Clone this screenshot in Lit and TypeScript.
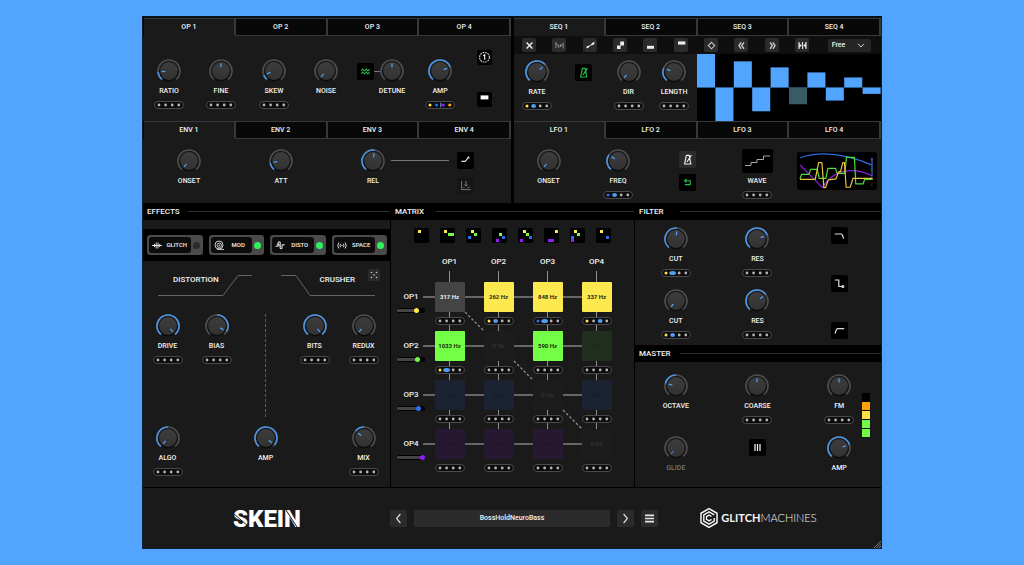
import { LitElement, html, svg, css, nothing } from "lit";
import { customElement, property } from "lit/decorators.js";
import { classMap } from "lit/directives/class-map.js";
import { styleMap } from "lit/directives/style-map.js";

const YELLOW = "#ffe94a";
const GREEN = "#72fa46";
const BLUE = "#2f6ff0";
const PURPLE = "#8f1ff5";
const ORANGE = "#ffa412";
const SKY = "#4f9ff5";

/* ---------- modulation slots: four small dots in a pill ---------- */

const DOTS: Record<string, { fill: string; rx: number; ry: number }> = {
  ".": { fill: "#b4b4b4", rx: 1.4, ry: 1.4 },
  y: { fill: YELLOW, rx: 1.5, ry: 1.5 },
  b: { fill: BLUE, rx: 1.5, ry: 1.5 },
  p: { fill: PURPLE, rx: 1.6, ry: 1.6 },
  o: { fill: ORANGE, rx: 1.6, ry: 1.6 },
  B: { fill: SKY, rx: 2.4, ry: 2.1 },
  W: { fill: SKY, rx: 3.4, ry: 2.1 },
};

@customElement("mod-slots")
export class ModSlots extends LitElement {
  @property() slots = "....";
  @property() for = "";

  static styles = css`
    :host { display: block; width: 30px; height: 8px; }
    .pill { display: block; width: 30px; height: 8px; padding: 0; border: 1px solid #4a4a4a; border-radius: 4px; background: #0c0c0c; box-sizing: border-box; cursor: pointer; }
    .dots { display: block; width: 28px; height: 6px; }
  `;

  render() {
    return html`<button class="pill" aria-label="${this.for} modulation">
      <svg class="dots" viewBox="0 0 28 6">
        ${[...this.slots].map((code, i) => {
          const dot = DOTS[code];
          return svg`<ellipse cx=${4 + i * 6.6} cy="3" rx=${dot.rx} ry=${dot.ry} fill=${dot.fill}></ellipse>`;
        })}
        ${this.slots === "ybpo" ? svg`<path d="M14.8 0.8v4.4" stroke="#5ab4ff" stroke-width="1"></path>` : nothing}
      </svg>
    </button>`;
  }
}

/* ---------- rotary knob ---------- */

const SWEEP = 140;

function polar(deg: number, r: number) {
  const a = ((deg - 90) * Math.PI) / 180;
  return { x: 12 + r * Math.cos(a), y: 12 + r * Math.sin(a) };
}

function arc(from: number, to: number) {
  const [a, b] = from < to ? [from, to] : [to, from];
  const p = polar(a, 11);
  const q = polar(b, 11);
  return `M${p.x} ${p.y}A11 11 0 ${b - a > 180 ? 1 : 0} 1 ${q.x} ${q.y}`;
}

@customElement("skein-knob")
export class SkeinKnob extends LitElement {
  @property() label = "";
  @property({ type: Number }) value = 0;
  @property({ type: Boolean }) bipolar = false;
  @property({ type: Boolean }) dim = false;
  @property() slots = "";

  static styles = css`
    :host { display: flex; flex-direction: column; align-items: center; min-width: 0; }
    .knob { display: flex; flex-direction: column; align-items: center; }
    .dial { position: relative; display: block; width: 24px; height: 24px; }
    .art { display: block; width: 24px; height: 24px; }
    .range { position: absolute; inset: 0; width: 100%; height: 100%; margin: 0; opacity: 0; cursor: pointer; }
    .text { margin-top: 3px; font: 500 7px/10px Roboto, sans-serif; color: #f2f2f2; white-space: nowrap; }
    .off { color: #777; }
    .mods { margin-top: 5px; }
  `;

  render() {
    const angle = -SWEEP + this.value * SWEEP * 2;
    const start = this.bipolar ? 0 : -SWEEP;
    const inner = polar(angle, 3.8);
    const outer = polar(angle, 7.6);
    return html`
      <label class="knob">
        <span class="dial">
          <svg class="art" viewBox="0 0 24 24" fill="none">
            <defs>
              <linearGradient id="face" x1="0" y1="0" x2="0" y2="1">
                <stop offset="0" stop-color="#3d3d3d"></stop>
                <stop offset="1" stop-color="#323232"></stop>
              </linearGradient>
            </defs>
            <circle cx="12" cy="12.8" r="9.4" fill="#0b0b0b"></circle>
            <circle cx="12" cy="12" r="8.9" fill="url(#face)"></circle>
            <path d=${arc(-SWEEP, SWEEP)} stroke="#4f4f4f" stroke-width="1.6"></path>
            ${angle !== start ? svg`<path d=${arc(start, angle)} stroke="#4b94e6" stroke-width="1.6"></path>` : nothing}
            <path d="M${inner.x} ${inner.y}L${outer.x} ${outer.y}" stroke="#4f9ff5" stroke-width="1.3" opacity=${this.dim ? 0.6 : 1}></path>
          </svg>
          <input class="range" type="range" min="0" max="1" step="0.01" .value=${String(this.value)} />
        </span>
        <span class="text ${this.dim ? "off" : ""}">${this.label}</span>
      </label>
      ${this.slots ? html`<mod-slots class="mods" .slots=${this.slots} .for=${this.label}></mod-slots>` : nothing}
    `;
  }
}

/* ---------- icons ---------- */

const metronome = svg`<path d="M4.6 12 6.4 3.4h2.8l1.6 8.6zM7 10 11.4 3.2" fill="none" stroke="currentColor" stroke-width="1.2" stroke-linejoin="round"></path>`;

const SEQ_TOOLS = [
  { name: "Clear", art: svg`<path d="M4.6 4.6l5.8 6M10.4 4.6l-5.8 6" stroke="#eee" stroke-width="1.4"></path>` },
  { name: "Random", art: svg`<path d="M4 4v6M4 5.2l2.6 3M6.8 7v3M8.4 6v3l2.6-3.4M11.2 4.5v6" stroke="#8c8c8c" stroke-width="1" fill="none"></path>` },
  { name: "Ramp", art: svg`<path d="M3.5 10.6V8.6l2.6-1v1.6zM8.4 7.4V5.8l3-2.4v2.8z" fill="#eee"></path><path d="M4 9.6l7-4.6" stroke="#eee" stroke-width=".9"></path>` },
  { name: "Steps", art: svg`<path d="M7.2 3.6H11v3.8H7.2zM4 7.4h3.6V11H4z" fill="#eee"></path>` },
  { name: "Minimum", art: svg`<path d="M4 7.8h7v3H4z" fill="#eee"></path>` },
  { name: "Maximum", art: svg`<path d="M4 3.4h7.4v3.2H4z" fill="#eee"></path>` },
  { name: "Invert", art: svg`<path d="M7.5 4.4l3.2 3.2-3.2 3.2-3.2-3.2z" fill="none" stroke="#c4c4c4" stroke-width="1.1"></path>` },
  { name: "Shift left", art: svg`<path d="M7.2 4.4 5 7.6l2.2 3.2M10 4.4 7.8 7.6l2.2 3.2" fill="none" stroke="#ccc" stroke-width="1.4"></path>` },
  { name: "Shift right", art: svg`<path d="M5 4.4l2.2 3.2L5 10.8M7.8 4.4l2.2 3.2-2.2 3.2" fill="none" stroke="#ccc" stroke-width="1.4"></path>` },
  { name: "Fold", art: svg`<path d="M4 4v7M7.5 4v7M11 4v7" fill="none" stroke="#ddd" stroke-width="1.2"></path><path d="M4 5l2.8 2.5L4 10zM11 5 8.2 7.5 11 10z" fill="#ddd"></path>` },
];

/* Sequencer step levels, -1..1 */
const STEPS = [1, -1, 0.78, -0.71, 0.6, -0.5, 0.45, -0.39, 0.3, -0.19];
const CURRENT_STEP = 5;

const EFFECTS = [
  { name: "GLITCH", on: false, art: svg`<path d="M0 5.5h10M2.5 4v3M4.2 2.5v6M6 2.5v6M7.7 4v3" stroke="#eee" stroke-width=".9"></path>` },
  { name: "MOD", on: true, art: svg`<g fill="none" stroke="#ddd" stroke-width=".9"><circle cx="5" cy="5" r="4"></circle><circle cx="5.3" cy="5.3" r="2.2"></circle><circle cx="5.4" cy="5.4" r=".5"></circle><path d="M3 9.4h7"></path></g>` },
  { name: "DISTO", on: true, art: svg`<path d="M.5 6.2h2.7V2h2v6.6h1.8V4.8h2.7M1.8 4.3h1.4M4.2 4.4v2" fill="none" stroke="#eee" stroke-width="1"></path>` },
  { name: "SPACE", on: true, art: svg`<g fill="none" stroke="#eee" stroke-width=".9"><path d="M1.8 2.5q-2 3 0 6M3.6 3.8q-1.2 1.7 0 3.4M8.2 2.5q2 3 0 6M6.4 3.8q1.2 1.7 0 3.4"></path><circle cx="5" cy="5.5" r=".3"></circle></g>` },
];

/* Routing presets: x, y, width, colour of each lit block */
type Block = [number, number, number, string];
const ROUTINGS: Block[][] = [
  [[4, 2, 3, YELLOW]],
  [[4, 2, 3, YELLOW], [8, 5, 6, GREEN]],
  [[5, 2, 3, YELLOW], [8, 5, 3, GREEN], [2, 8, 3, BLUE]],
  [[7, 5, 3, GREEN], [10, 8, 3, BLUE], [4, 11, 3, PURPLE]],
  [[5, 2, 3, YELLOW], [8, 5, 3, GREEN], [11, 8, 3, BLUE], [2, 11, 3, PURPLE]],
  [[11, 2, 3, YELLOW], [4, 11, 6, PURPLE]],
  [[4, 2, 3, YELLOW], [7, 5, 3, GREEN], [1, 8, 3, BLUE], [1, 11, 3, PURPLE]],
  [[4, 2, 3, YELLOW], [10, 8, 3, BLUE]],
];

interface Cell { text: string; tone: string; slots: string; }
const cell = (text: string, tone: string, slots = "...."): Cell => ({ text, tone, slots });

const MATRIX = [
  { name: "OP1", color: YELLOW, level: 73, cells: [cell("317 Hz", "self"), cell("262 Hz", "yellow", "yB.."), cell("848 Hz", "yellow", "bW.."), cell("337 Hz", "yellow", "y.B.")] },
  { name: "OP2", color: GREEN, level: 78, cells: [cell("1033 Hz", "green", "yW.."), cell("0 Hz", "none"), cell("590 Hz", "green"), cell("0 Hz", "green-off")] },
  { name: "OP3", color: BLUE, level: 84, cells: [cell("0 Hz", "blue-off"), cell("0 Hz", "blue-off"), cell("0 Hz", "none"), cell("0 Hz", "blue-off")] },
  { name: "OP4", color: PURPLE, level: 100, cells: [cell("0 Hz", "purple-off"), cell("0 Hz", "purple-off"), cell("0 Hz", "purple-off"), cell("0 Hz", "none")] },
];

const METER = ["#000", "#ff9f0a", "#fbe04a", "#72fa46", "#72fa46"];

@customElement("app-root")
export class AppRoot extends LitElement {
  static styles = css`
    :host { display: block; min-height: 100vh; box-sizing: border-box; padding: 16px 142px; background: #52a5ff; font: 500 7px/10px Roboto, sans-serif; color: #f2f2f2; }
    .synth { position: relative; background: #000; border: 1px solid #0d1c30; border-top: 2px solid #0b1119; }
    .panel { background: #1a1a1a; min-width: 0; }

    .tabs { display: grid; grid-template-columns: repeat(4, 1fr); height: 18px; }
    .inset { padding-left: 1px; }
    .tab { appearance: none; margin: 0; padding: 0 0 1px; border: 0 solid #37383b; border-width: 1px 2px 1px 0; background: #080808; color: #f2f2f2; font: 500 7px/10px Roboto, sans-serif; cursor: pointer; }
    .active { background: #1a1a1a; border-bottom-color: #1a1a1a; }

    .btn { display: grid; place-items: center; flex: none; box-sizing: border-box; width: 15px; height: 15px; margin: 0; padding: 0; border: 0; border-radius: 2px; background: #000; color: #ededed; cursor: pointer; }
    .mid { width: 17px; height: 17px; }
    .raised { background: #2b2b2b; }
    .faint { background: #161616; }
    .lit { color: #25c04a; }
    .ico { display: block; width: 15px; height: 15px; }

    .voices { display: grid; grid-template-columns: 368fr 367fr; column-gap: 3px; }
    .ops { display: grid; grid-template-columns: 52fr 52fr 54fr 50fr 29fr 24fr 72fr 16fr 19fr; min-height: 85px; }
    .drop { padding-top: 23px; }
    .linked { display: flex; align-items: center; justify-content: flex-end; height: 24px; margin-top: 23px; }
    .wire { width: 6px; height: 1px; background: #777; }
    .stack { display: flex; flex-direction: column; align-items: center; justify-content: space-between; }
    .op-side { margin: 14px 0; }

    .seq-tools { display: grid; grid-template-columns: repeat(10, 10fr) 21fr; place-items: center; height: 18px; background: #0f0f0f; }
    .tool { width: 14px; height: 14px; }
    .pick { display: grid; align-items: center; }
    .mode { grid-area: 1 / 1; appearance: none; width: 43px; height: 13px; margin: 0; padding: 0 0 0 4px; border: 0; border-radius: 2px; background: #262626; color: #f2f2f2; font: 500 7px/13px Roboto, sans-serif; }
    .arrow { grid-area: 1 / 1; justify-self: end; width: 8px; height: 5px; margin-right: 6px; pointer-events: none; }
    .seq { display: grid; grid-template-columns: 46fr 46fr 45fr 46fr 184fr; min-height: 67px; }
    .seq-drop { padding-top: 6px; }
    .seq-sync { display: grid; place-items: center; height: 24px; margin-top: 6px; }
    .steps { display: block; width: 100%; height: 67px; background: #000; }

    .env { display: grid; grid-template-columns: 92fr 92fr 28fr 36fr 58fr 32fr 30fr; align-items: start; min-height: 64px; box-sizing: border-box; padding-top: 10px; }
    .curve { height: 1px; margin-top: 11px; background: #777; }
    .env-side { gap: 8px; padding-top: 3px; }
    .lfo { display: grid; grid-template-columns: 69fr 70fr 69fr 70fr 89fr; align-items: start; min-height: 64px; box-sizing: border-box; padding-top: 10px; }
    .lfo-side { gap: 6px; padding-top: 2px; }
    .wave-cell { display: flex; flex-direction: column; align-items: center; }
    .wave { display: block; width: 31px; height: 24px; padding: 0; border: 0; border-radius: 2px; background: #000; }
    .wave-art { display: block; width: 31px; height: 24px; }
    .caption { margin-top: 3px; }
    .slots { margin-top: 5px; }
    .scope { justify-self: center; display: block; width: 80px; height: 38px; margin-top: 3px; border-radius: 3px; background: #000; }

    .lower { display: grid; grid-template-columns: 247fr 243fr 246fr; column-gap: 1px; }
    .head { display: flex; align-items: center; gap: 8px; height: 17px; padding-left: 4px; background: #000; }
    .title { margin: 0; min-width: 33px; font: 500 8px/10px Roboto, sans-serif; }
    .rule { flex: 1; height: 1px; background: #303033; }
    .column { display: flex; flex-direction: column; min-width: 0; }

    .band { height: 9px; background: #1a1a1a; }
    .toggles { display: grid; grid-template-columns: repeat(4, 1fr); column-gap: 6px; padding: 6px 3px 6px 4px; }
    .toggle { display: flex; align-items: center; box-sizing: border-box; height: 20px; padding: 2px; border-radius: 3px; background: #4a4a4a; cursor: pointer; }
    .plate { flex: 1; display: flex; align-items: center; box-sizing: border-box; height: 16px; padding-left: 3px; border-radius: 3px; background: #0c0c0c; }
    .fx-ico { flex: none; width: 11px; height: 11px; }
    .fx-name { flex: 1; text-align: center; font: 500 6px/10px Roboto, sans-serif; }
    .led { appearance: none; flex: none; width: 7px; height: 7px; margin: 0 1px 0 2px; border-radius: 50%; background: #2b2b2b; }
    .led:checked { background: #2df25e; }
    .fx-body { flex: 1; padding: 14px 2px 10px 0; }
    .fx-heads { position: relative; display: flex; justify-content: space-between; padding: 0 13px 0 15px; }
    .fx-head { display: grid; width: 94px; height: 21px; }
    .outline { grid-area: 1 / 1; width: 94px; height: 21px; }
    .fx-title { grid-area: 1 / 1; margin: 0; font: 500 8px/10px Roboto, sans-serif; }
    .to-left { padding-left: 15px; }
    .to-right { padding-right: 20px; text-align: right; }
    .die { position: absolute; right: 8px; top: -6px; width: 12px; height: 12px; }
    .die-art { width: 12px; height: 12px; }
    .fx-knobs { display: grid; grid-template-columns: repeat(5, 1fr); grid-template-rows: 103px auto; row-gap: 9px; align-items: start; margin-top: 18px; }
    .divider { justify-self: center; height: 103px; border-left: 1px dashed #5c5c5c; }
    .skip { grid-column: 3; }
    .last { grid-column: 5; }

    .matrix { flex: 1; padding: 8px 0 9px; }
    .routes { display: flex; justify-content: center; gap: 11px; }
    .grid { display: grid; grid-template-columns: 28px repeat(4, 49px); grid-template-rows: 25px repeat(4, 49px); justify-content: center; margin-top: 14px; padding-right: 7px; }
    .lines { grid-area: 1 / 1 / -1 / -1; width: 224px; height: 221px; }
    .col-name { grid-row: 1; text-align: center; font: 500 8px/10px Roboto, sans-serif; }
    .c0 { grid-column: 2; }
    .c1 { grid-column: 3; }
    .c2 { grid-column: 4; }
    .c3 { grid-column: 5; }
    .r0 { grid-row: 2; }
    .r1 { grid-row: 3; }
    .r2 { grid-row: 4; }
    .r3 { grid-row: 5; }
    .row-name { grid-column: 1; display: flex; flex-direction: column; align-items: center; gap: 6px; padding-top: 10px; font: 500 8px/10px Roboto, sans-serif; }
    .level { appearance: none; width: 28px; height: 5px; margin: 0; border-radius: 3px; background: linear-gradient(90deg, #454545 var(--level), #000 var(--level)) center / 100% 3px no-repeat #000; }
    .level::-webkit-slider-thumb { appearance: none; width: 5px; height: 5px; border-radius: 50%; background: var(--tone); }
    .node { display: flex; flex-direction: column; align-items: center; gap: 5px; }
    .amount { width: 30px; height: 30px; margin: 0; padding: 0; border: 0; border-radius: 1px; font: 700 6px/10px Roboto, sans-serif; white-space: nowrap; cursor: pointer; }
    .self { background: #444; color: #f2f2f2; }
    .yellow { background: #fce94f; color: #2a2712; }
    .green { background: #72ff46; color: #16300e; }
    .none { background: #1c1c1c; color: #363636; font-weight: 500; }
    .green-off { background: #212f1e; color: #1b271a; font-weight: 500; }
    .blue-off { background: #1b2231; color: #181c28; font-weight: 500; }
    .purple-off { background: #261830; color: #1f1528; font-weight: 500; }

    .filter { display: grid; grid-template-columns: repeat(3, 1fr); min-height: 125px; box-sizing: border-box; padding: 7px 1px 0 0; }
    .pair { display: grid; grid-template-rows: 62px auto; align-items: start; }
    .shapes { padding-bottom: 6px; }
    .master { display: grid; grid-template-columns: 82fr 82fr 18fr 46fr 18fr; grid-template-rows: 62px auto; align-items: start; min-height: 125px; box-sizing: border-box; padding: 12px 1px 0 0; }
    .fourth { grid-column: 4; }
    .chord { justify-self: center; margin-top: 3px; }
    .meter { grid-column: 5; grid-row: 1 / 3; display: grid; gap: 1px; width: 8px; margin-top: 19px; background: #000; }
    .seg { height: 8px; }

    .foot { display: grid; grid-template-columns: 247fr 268fr 200fr 23fr; place-items: center; height: 60px; margin-top: 1px; background: #1a1a1a; }
    .word { width: 84px; height: 40px; }
    .word-text { font: 900 24px Roboto, sans-serif; fill: #fff; }
    .presets { display: flex; gap: 7px; width: 100%; }
    .name { flex: 1; height: 17px; margin: 0; padding: 0; border: 0; border-radius: 2px; background: #2b2b2b; color: #f2f2f2; font: 500 7px/10px Roboto, sans-serif; cursor: pointer; }
    .brand { display: flex; align-items: center; gap: 2px; color: #f5f5f5; text-decoration: none; font: 300 11px/20px Lato, sans-serif; }
    .strong { font-weight: 700; }
    .hex { width: 20px; height: 22px; }
    .grip { position: absolute; right: 0; bottom: 0; width: 7px; height: 7px; }

    @media (max-width: 900px) {
      :host { padding: 16px; }
    }
  `;

  tabs(name: string, inset = false) {
    return html`<div class=${classMap({ tabs: true, inset })} role="tablist">
      ${[1, 2, 3, 4].map(
        (n) => html`<button role="tab" aria-selected=${n === 1} class=${classMap({ tab: true, active: n === 1 })}>${name} ${n}</button>`
      )}
    </div>`;
  }

  head(title: string) {
    return html`<header class="head"><h2 class="title">${title}</h2><span class="rule"></span></header>`;
  }

  operators() {
    return html`<div class="panel ops">
      <skein-knob class="drop" label="RATIO" value="0.16" slots="...."></skein-knob>
      <skein-knob class="drop" label="FINE" value="0.5" bipolar slots="...."></skein-knob>
      <skein-knob class="drop" label="SKEW" value="0.1" slots="...."></skein-knob>
      <skein-knob class="drop" label="NOISE" value="0"></skein-knob>
      <div class="linked">
        <button class="btn mid lit" aria-label="Detune mode">
          <svg class="ico" viewBox="0 0 15 15" fill="none" stroke="currentColor" stroke-width="1.1"><path d="M3.2 6.6l1.4-1.6 1.8 2 1.8-2 1.8 2 1.6-1.8M3.2 9.6l1.4-1.6 1.8 2 1.8-2 1.8 2 1.6-1.8"></path></svg>
        </button>
        <span class="wire"></span>
      </div>
      <skein-knob class="drop" label="DETUNE" value="0.5" bipolar></skein-knob>
      <skein-knob class="drop" label="AMP" value="0.75" slots="ybpo"></skein-knob>
      <div class="stack op-side">
        <button class="btn" aria-label="Retrigger">
          <svg class="ico" viewBox="0 0 15 15"><circle cx="7.5" cy="7.3" r="4.9" fill="none" stroke="#ddd" stroke-width="1.1" stroke-dasharray="1.7 .86"></circle><path d="M6.3 5.8l1.4-1v5" fill="none" stroke="#fff" stroke-width="1.1"></path></svg>
        </button>
        <button class="btn" aria-label="Output">
          <svg class="ico" viewBox="0 0 15 15"><path d="M3.6 3.4h7.8v4H3.6z" fill="#fff"></path></svg>
        </button>
      </div>
    </div>`;
  }

  sequencer() {
    return html`<div class="panel">
      <div class="seq-tools">
        ${SEQ_TOOLS.map(
          (t) => html`<button class="btn raised tool" aria-label=${t.name}><svg class="ico" viewBox="0 0 15 15">${t.art}</svg></button>`
        )}
        <div class="pick">
          <select class="mode" aria-label="Sequencer mode"><option>Free</option><option>Sync</option></select>
          <svg class="arrow" viewBox="0 0 8 5"><path d="M1 .8l3 3.2 3-3.2" fill="none" stroke="#ccc" stroke-width="1"></path></svg>
        </div>
      </div>
      <div class="seq">
        <skein-knob class="seq-drop" label="RATE" value="0.67" slots="yB.."></skein-knob>
        <div class="seq-sync"><button class="btn mid lit" aria-label="Sync rate"><svg class="ico" viewBox="0 0 15 15">${metronome}</svg></button></div>
        <skein-knob class="seq-drop" label="DIR" value="0" slots="...."></skein-knob>
        <skein-knob class="seq-drop" label="LENGTH" value="0.25" slots="...."></skein-knob>
        <svg class="steps" viewBox="0 0 10 2" preserveAspectRatio="none" role="img" aria-label="Steps">
          ${STEPS.map(
            (v, i) => svg`<rect x=${i} y=${v > 0 ? 1 - v : 1} width=".98" height=${Math.abs(v)} fill=${i === CURRENT_STEP ? "#3a5a66" : "#52a5ff"}></rect>`
          )}
          <path d="M0 1h10" stroke="#2d6cae" stroke-width=".015"></path>
        </svg>
      </div>
    </div>`;
  }

  envelope() {
    return html`<div class="panel env">
      <skein-knob label="ONSET" value="0"></skein-knob>
      <skein-knob label="ATT" value="0.14"></skein-knob>
      <span></span>
      <skein-knob label="REL" value="0.53"></skein-knob>
      <span class="curve"></span>
      <div class="stack env-side">
        <button class="btn mid" aria-label="Envelope curve">
          <svg class="ico" viewBox="0 0 15 15"><path d="M3.4 8.4h3.8l3-3.6" fill="none" stroke="#ddd" stroke-width="1.1"></path><path d="M8.9 4.8l2.2-1.8.4 2.8z" fill="#ddd"></path></svg>
        </button>
        <button class="btn mid faint" aria-label="Envelope trigger">
          <svg class="ico" viewBox="0 0 15 15" fill="none" stroke="#777" stroke-width="1"><path d="M3.6 3v8.6h9M8 3v5M6.4 6.4 8 8.2l1.6-1.8M9.6 9.4h2M5.4 9.4h1"></path></svg>
        </button>
      </div>
    </div>`;
  }

  lfo() {
    return html`<div class="panel lfo">
      <skein-knob label="ONSET" value="0"></skein-knob>
      <skein-knob label="FREQ" value="0.3" slots="bB.."></skein-knob>
      <div class="stack lfo-side">
        <button class="btn mid raised" aria-label="Sync LFO"><svg class="ico" viewBox="0 0 15 15">${metronome}</svg></button>
        <button class="btn mid lit" aria-label="Loop">
          <svg class="ico" viewBox="0 0 15 15"><path d="M6.4 4 4.6 5.8l1.8 1.8M4.8 5.8h5.4v3.8H5" fill="none" stroke="currentColor" stroke-width="1.1"></path></svg>
        </button>
      </div>
      <div class="wave-cell">
        <button class="wave" aria-labelledby="wave-name">
          <svg class="wave-art" viewBox="0 0 31 24"><path d="M3 16.5h6v-3h6v-3h6.5V7H28" fill="none" stroke="#a8a8a8" stroke-width="1"></path></svg>
        </button>
        <span class="caption" id="wave-name">WAVE</span>
        <mod-slots class="slots" .for=${"WAVE"}></mod-slots>
      </div>
      <svg class="scope" viewBox="859 96 241 114" fill="none" stroke-width="3.6" stroke-linejoin="round" role="img" aria-label="LFO scope">
        <path d="M868 113Q960 82 1087 136M1085 113V166" stroke="#2f6ce0"></path>
        <path d="M868 135L915 182 935 203Q960 166 988 158 1030 142 1087 168" stroke="#8a1fd8"></path>
        <path d="M868 177L873 163H895L900 148H920L926 175H946L952 145H975L980 160H1003L1008 112H1032L1036 192H1058L1063 178H1087" stroke="#4fdc3c"></path>
        <path d="M868 178H914L924 128H934L940 203H945L953 180 976 177 985 155H990L997 128H1002L1007 202H1019L1028 175H1087" stroke="#e8c63c"></path>
        <g font-size="13" font-family="Roboto" stroke="none" opacity=".7"><text x="1080" y="124" fill="#a89a30">1</text><text x="1080" y="152" fill="#2a9a30">2</text><text x="1080" y="174" fill="#2f6ce0">3</text><text x="1080" y="197" fill="#6a1fa8">4</text></g>
      </svg>
    </div>`;
  }

  effects() {
    return html`<section class="column">
      ${this.head("EFFECTS")}
      <div class="band"></div>
      <div class="toggles">
        ${EFFECTS.map(
          (fx) => html`<label class="toggle">
            <span class="plate"><svg class="fx-ico" viewBox="0 0 11 11">${fx.art}</svg><span class="fx-name">${fx.name}</span></span>
            <input class="led" type="checkbox" ?checked=${fx.on} />
          </label>`
        )}
      </div>
      <div class="panel fx-body">
        <div class="fx-heads">
          <div class="fx-head">
            <svg class="outline" viewBox="0 0 94 21"><path d="M0 20.5H65L80 .5H94" fill="none" stroke="#666" stroke-width="1"></path></svg>
            <h3 class="fx-title to-left">DISTORTION</h3>
          </div>
          <div class="fx-head">
            <svg class="outline" viewBox="0 0 94 21"><path d="M0 .5H15L29 20.5H94" fill="none" stroke="#666" stroke-width="1"></path></svg>
            <h3 class="fx-title to-right">CRUSHER</h3>
          </div>
          <button class="btn raised die" aria-label="Randomise">
            <svg class="die-art" viewBox="0 0 12 12" fill="#ccc"><circle cx="3.5" cy="3.5" r=".8"></circle><circle cx="8.5" cy="3.5" r=".8"></circle><circle cx="6" cy="6" r=".8"></circle><circle cx="3.5" cy="8.5" r=".8"></circle><circle cx="8.5" cy="8.5" r=".8"></circle></svg>
          </button>
        </div>
        <div class="fx-knobs">
          <skein-knob label="DRIVE" value="1" slots="...."></skein-knob>
          <skein-knob label="BIAS" value="0.93" bipolar slots="...."></skein-knob>
          <span class="divider"></span>
          <skein-knob label="BITS" value="1" slots="...."></skein-knob>
          <skein-knob label="REDUX" value="0" slots="...."></skein-knob>
          <skein-knob label="ALGO" value="0" bipolar slots="...."></skein-knob>
          <skein-knob class="skip" label="AMP" value="0.96"></skein-knob>
          <skein-knob class="last" label="MIX" value="0.32" bipolar slots="...."></skein-knob>
        </div>
      </div>
    </section>`;
  }

  matrix() {
    const idx = [0, 1, 2, 3];
    return html`<section class="column">
      ${this.head("MATRIX")}
      <div class="panel matrix">
        <div class="routes">
          ${ROUTINGS.map(
            (blocks, i) => html`<button class="btn" aria-label="Routing ${i + 1}">
              <svg class="ico" viewBox="0 0 15 15">${blocks.map(([x, y, w, c]) => svg`<rect x=${x} y=${y} width=${w} height="3" fill=${c}></rect>`)}</svg>
            </button>`
          )}
        </div>
        <div class="grid">
          <svg class="lines" viewBox="0 0 224 221" fill="none" stroke="#909090">
            ${idx.map((i) => svg`<path d="M${52.5 + 49 * i} 14V${25 + 147}"></path><path d="M26 ${40 + 49 * i}H199" stroke="#808080" stroke-width="1.4"></path>`)}
            ${idx.slice(0, 3).map((i) => svg`<path d="M${68 + 49 * i} ${55 + 49 * i}l19 19" stroke-width="1.3" stroke-dasharray="2.6 2"></path>`)}
          </svg>
          ${MATRIX.map((row, c) => html`<span class="col-name c${c}">${row.name}</span>`)}
          ${MATRIX.map(
            (row, r) => html`
              <label class="row-name r${r}">${row.name}
                <input class="level" type="range" .value=${String(row.level)} style=${styleMap({ "--level": `${row.level - 5}%`, "--tone": row.color })} />
              </label>
              ${row.cells.map(
                (item, c) => html`<div class="node r${r} c${c}">
                  <button class="amount ${item.tone}">${item.text}</button>
                  <mod-slots .slots=${item.slots} .for=${`${row.name} to OP${c + 1}`}></mod-slots>
                </div>`
              )}
            `
          )}
        </div>
      </div>
    </section>`;
  }

  filterMaster() {
    return html`<section class="column">
      ${this.head("FILTER")}
      <div class="panel filter">
        <div class="pair">
          <skein-knob label="CUT" value="0.52" slots="yW.."></skein-knob>
          <skein-knob label="CUT" value="0" slots="yB.."></skein-knob>
        </div>
        <div class="pair">
          <skein-knob label="RES" value="0.75" slots="...."></skein-knob>
          <skein-knob label="RES" value="0.69" slots="...."></skein-knob>
        </div>
        <div class="stack shapes">
          <button class="btn mid" aria-label="Low pass"><svg class="ico" viewBox="0 0 15 15"><path d="M2.6 6h6.6q1 0 1.6 2l.8 2.6" fill="none" stroke="#ddd" stroke-width="1.2"></path></svg></button>
          <button class="btn mid" aria-label="Filter routing"><svg class="ico" viewBox="0 0 15 15"><path d="M2.8 4h4v6.5h3" fill="none" stroke="#ddd" stroke-width="1.2"></path><circle cx="10.8" cy="10.4" r="1.5" fill="#ddd"></circle></svg></button>
          <button class="btn mid" aria-label="High pass"><svg class="ico" viewBox="0 0 15 15"><path d="M3 10.6l1-3q.6-2 1.6-2h6.6" fill="none" stroke="#ddd" stroke-width="1.2"></path></svg></button>
        </div>
      </div>
      ${this.head("MASTER")}
      <div class="panel master">
        <skein-knob label="OCTAVE" value="0.23" bipolar></skein-knob>
        <skein-knob label="COARSE" value="0.5" bipolar slots="...."></skein-knob>
        <skein-knob class="fourth" label="FM" value="0.5" bipolar slots="...."></skein-knob>
        <div class="meter" role="img" aria-label="Output level">
          ${METER.map((c) => html`<span class="seg" style=${styleMap({ background: c })}></span>`)}
        </div>
        <skein-knob label="GLIDE" value="0" dim></skein-knob>
        <button class="btn mid chord" aria-label="Voices"><svg class="ico" viewBox="0 0 15 15"><path d="M5 4v7M7.5 4v7M10 4v7" stroke="#fff" stroke-width="1.2"></path></svg></button>
        <skein-knob class="fourth" label="AMP" value="0.76"></skein-knob>
      </div>
    </section>`;
  }

  footer() {
    return html`<footer class="foot">
      <svg class="word" viewBox="0 0 84 40" role="img" aria-label="Skein">
        <text class="word-text" x="42" y="29" text-anchor="middle">SKEIN</text>
        <path d="M9 16l14 12M61 12l11 17" stroke="#1a1a1a" stroke-width="1"></path>
      </svg>
      <div class="presets">
        <button class="btn mid raised" aria-label="Previous preset"><svg class="ico" viewBox="0 0 15 15"><path d="M9.4 3 5.6 7.5 9.4 12" fill="none" stroke="#ddd" stroke-width="1.2"></path></svg></button>
        <button class="name">BossHoldNeuroBass</button>
        <button class="btn mid raised" aria-label="Next preset"><svg class="ico" viewBox="0 0 15 15"><path d="M5.6 3l3.8 4.5L5.6 12" fill="none" stroke="#ddd" stroke-width="1.2"></path></svg></button>
        <button class="btn mid raised" aria-label="Menu"><svg class="ico" viewBox="0 0 15 15"><path d="M3 4.3h9M3 7.5h9M3 10.7h9" stroke="#e6e6e6" stroke-width="1.7"></path></svg></button>
      </div>
      <a class="brand" href="#">
        <svg class="hex" viewBox="0 0 20 22" fill="none" stroke="#f5f5f5">
          <path d="M10 1.6l8 4.7v9.4l-8 4.7-8-4.7V6.3z" stroke-width="1.5"></path>
          <path d="M15.2 7.8 10 4.9 4.8 7.9v6.2l5.2 3 5.2-3V11" stroke-width="1.4"></path>
          <path d="M12.5 9.5 10 8.1 7.5 9.6v2.8l2.5 1.5 2.5-1.5" stroke-width="1.3"></path>
        </svg>
        <span><span class="strong">GLITCH</span>MACHINES</span>
      </a>
      <svg class="grip" viewBox="0 0 7 7"><path d="M0 7l7-7M2.5 7 7 2.5M5 7l2-2" stroke="#999" stroke-width=".8"></path></svg>
    </footer>`;
  }

  render() {
    return html`<main class="synth">
      <div class="voices">
        <section class="column">${this.tabs("OP", true)}${this.operators()}${this.tabs("ENV", true)}${this.envelope()}</section>
        <section class="column">${this.tabs("SEQ")}${this.sequencer()}${this.tabs("LFO")}${this.lfo()}</section>
      </div>
      <div class="lower">${this.effects()}${this.matrix()}${this.filterMaster()}</div>
      ${this.footer()}
    </main>`;
  }
}
